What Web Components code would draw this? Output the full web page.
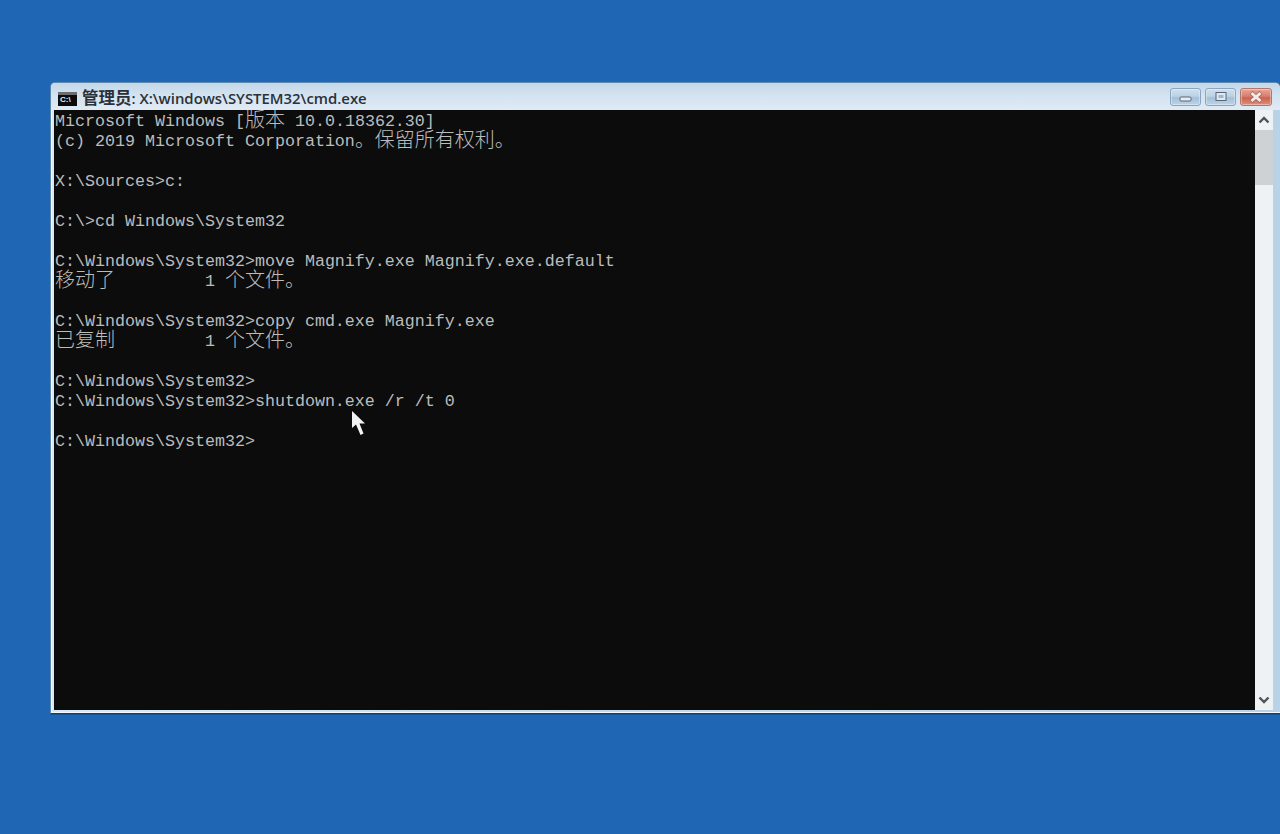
<!DOCTYPE html>
<html>
<head>
<meta charset="utf-8">
<title>cmd</title>
<style>
  html, body { margin: 0; height: 100%; background: #1f66b4; overflow: hidden; }
</style>
</head>
<body>
<desktop-page>
  <console-window title-text="管理员: X:\windows\SYSTEM32\cmd.exe">
    <console-line>Microsoft Windows [<wide-text>版本</wide-text> 10.0.18362.30]</console-line>
    <console-line>(c) 2019 Microsoft Corporation<wide-text>。保留所有权利。</wide-text></console-line>
    <console-line></console-line>
    <console-line>X:\Sources&gt;c:</console-line>
    <console-line></console-line>
    <console-line>C:\&gt;cd Windows\System32</console-line>
    <console-line></console-line>
    <console-line>C:\Windows\System32&gt;move Magnify.exe Magnify.exe.default</console-line>
    <console-line><wide-text>移动了</wide-text>         1 <wide-text>个文件。</wide-text></console-line>
    <console-line></console-line>
    <console-line>C:\Windows\System32&gt;copy cmd.exe Magnify.exe</console-line>
    <console-line><wide-text>已复制</wide-text>         1 <wide-text>个文件。</wide-text></console-line>
    <console-line></console-line>
    <console-line>C:\Windows\System32&gt;</console-line>
    <console-line>C:\Windows\System32&gt;shutdown.exe /r /t 0</console-line>
    <console-line></console-line>
    <console-line>C:\Windows\System32&gt;</console-line>
  </console-window>
</desktop-page>

<script>
class DesktopPage extends HTMLElement {
  constructor() {
    super();
    this.attachShadow({ mode: "open" });
    this.shadowRoot.innerHTML = `
    <style>
      :host {
        display: block;
        position: relative;
        width: 1280px;
        height: 834px;
        box-sizing: border-box;
        padding: 82px 0 0 50px;
        overflow: hidden;
        background: #1f66b4;
      }
      .cursor {
        position: absolute;
        left: 351px;
        top: 410px;
        width: 15px;
        height: 26px;
      }
    </style>
    <slot></slot>
    <svg class="cursor" viewBox="0 0 15 26">
      <path d="M1 1 L1 18 L5 14.5 L9.5 25 L12.5 23.5 L8.5 13.5 L14 13.5 Z" fill="#f2f2f2"/>
    </svg>`;
  }
}

class CaptionButton extends HTMLElement {
  constructor() {
    super();
    this.attachShadow({ mode: "open" });
    this.shadowRoot.innerHTML = `
    <style>
      :host {
        display: flex;
        align-items: center;
        justify-content: center;
        width: 31px;
        height: 18px;
        box-sizing: border-box;
        border: 1px solid #8aa5bf;
        border-radius: 3px;
        background: linear-gradient(#cfe0ee, #bcd2e5 45%, #a3bfd8 55%, #bdd4e7);
        box-shadow: inset 0 0 0 1px rgba(255,255,255,.35);
      }
      :host([kind="close"]) {
        width: 32px;
        border-color: #b0776c;
        background: linear-gradient(#e8a698, #d97f6d 45%, #cc6350 55%, #dd8f7c);
      }
      svg { display: block; }
    </style>
    <svg width="16" height="12" viewBox="0 0 16 12"></svg>`;
  }

  connectedCallback() {
    const glyphs = {
      min: `<rect x="2" y="6" width="11" height="4" rx="1" fill="#e6edf3" stroke="#5a6776"/>`,
      max: `<rect x="3" y="1.5" width="10" height="8" fill="#dfe9f2" stroke="#5a6776"/><rect x="5.5" y="4" width="5" height="3" fill="#9db8d0"/>`,
      close: `<path d="M3 1.5 L13 10.5 M13 1.5 L3 10.5" stroke="#a8685c" stroke-width="4.4"/><path d="M3.5 2 L12.5 10 M12.5 2 L3.5 10" stroke="#f4ece8" stroke-width="3"/>`
    };
    this.shadowRoot.querySelector("svg").innerHTML = glyphs[this.getAttribute("kind")];
  }
}

class ScrollBar extends HTMLElement {
  constructor() {
    super();
    this.attachShadow({ mode: "open" });
    this.shadowRoot.innerHTML = `
    <style>
      :host {
        display: flex;
        flex-direction: column;
        width: 18px;
        background: #eef2f5;
      }
      .arrow { height: 20px; display: flex; align-items: center; justify-content: center; }
      .track { flex: 1; }
      .thumb { height: 55px; background: #cfd2d5; }
    </style>
    <div class="arrow">
      <svg width="12" height="8" viewBox="0 0 12 8"><path d="M1.5 6.5 L6 2 L10.5 6.5" fill="none" stroke="#4d5359" stroke-width="2.4"/></svg>
    </div>
    <div class="track"><div class="thumb"></div></div>
    <div class="arrow">
      <svg width="12" height="8" viewBox="0 0 12 8"><path d="M1.5 1.5 L6 6 L10.5 1.5" fill="none" stroke="#4d5359" stroke-width="2.4"/></svg>
    </div>`;
  }
}

class ConsoleWindow extends HTMLElement {
  constructor() {
    super();
    this.attachShadow({ mode: "open" });
    this.shadowRoot.innerHTML = `
    <style>
      :host {
        display: flex;
        flex-direction: column;
        width: 1230px;
        height: 632px;
        box-sizing: border-box;
        border: 1px solid #5f88ad;
        border-bottom-color: #123f6e;
        border-right: 0;
        border-radius: 5px 5px 0 0;
        background: linear-gradient(90deg, #dce9f4, #c4d9eb 45%, #b9d2e8);
        box-shadow: 0 1px 0 #17538f;
      }
      .caption {
        display: flex;
        align-items: center;
        height: 27px;
        flex: none;
        box-sizing: border-box;
        padding: 0 8px 0 7px;
        background: linear-gradient(#c3d8ea, #d5e4f1 50%, #dfeaf4);
        border-radius: 5px 5px 0 0;
      }
      .icon {
        width: 19px;
        height: 14px;
        box-sizing: border-box;
        border-top: 3px solid #6d6d6d;
        background: #0c0c0c;
        color: #f0f0f0;
        font: bold 8px/10px "Liberation Sans", sans-serif;
        padding-left: 2px;
        overflow: hidden;
        margin-top: 4px;
      }
      .title {
        margin: 4px 0 0 5px;
        font: 600 14.9px/27px "Open Sans", "Noto Sans CJK SC", sans-serif;
        color: #2b3138;
        white-space: pre;
        flex: 1;
      }
      .title b { font: 600 16.5px "Noto Sans CJK SC", sans-serif; }
      .buttons { display: flex; gap: 4px; }
      .body {
        flex: 1;
        display: flex;
        min-height: 0;
        padding: 0 7px 3px 3px;
        box-shadow: inset 1px 0 0 #f4f9fd, inset 0 -1px 0 #f4f9fd;
      }
      .screen {
        flex: 1;
        min-width: 0;
        box-sizing: border-box;
        padding: 2px 0 0 1px;
        background: #0c0c0c;
        overflow: hidden;
      }
    </style>
    <div class="caption">
      <div class="icon">C:\\</div>
      <div class="title"></div>
      <div class="buttons">
        <caption-button kind="min"></caption-button>
        <caption-button kind="max"></caption-button>
        <caption-button kind="close"></caption-button>
      </div>
    </div>
    <div class="body">
      <div class="screen"><slot></slot></div>
      <scroll-bar></scroll-bar>
    </div>`;
  }

  connectedCallback() {
    const text = this.getAttribute("title-text");
    const title = this.shadowRoot.querySelector(".title");
    const wide = document.createElement("b");
    wide.textContent = text.slice(0, 3);
    title.append(wide, text.slice(3));
  }
}

// no whitespace in these two shadow roots: white-space: pre would print it
class ConsoleLine extends HTMLElement {
  constructor() {
    super();
    this.attachShadow({ mode: "open" });
    this.shadowRoot.innerHTML = `<style>
      :host {
        display: block;
        height: 20px;
        font: 16.67px/20px "Liberation Mono", "Noto Sans CJK SC", monospace;
        color: #bcbcbc;
      }
      slot { white-space: pre; }
    </style><slot></slot>`;
  }
}

// cjk cells are two columns wide, so 20px against the 10px latin column
class WideText extends HTMLElement {
  constructor() {
    super();
    this.attachShadow({ mode: "open" });
    this.shadowRoot.innerHTML = `<style>
      :host {
        display: inline;
        font: 300 20px/0 "Noto Sans CJK SC", sans-serif;
        vertical-align: -1px;
      }
    </style><slot></slot>`;
  }
}

customElements.define("desktop-page", DesktopPage);
customElements.define("caption-button", CaptionButton);
customElements.define("scroll-bar", ScrollBar);
customElements.define("console-window", ConsoleWindow);
customElements.define("console-line", ConsoleLine);
customElements.define("wide-text", WideText);
</script>
</body>
</html>
